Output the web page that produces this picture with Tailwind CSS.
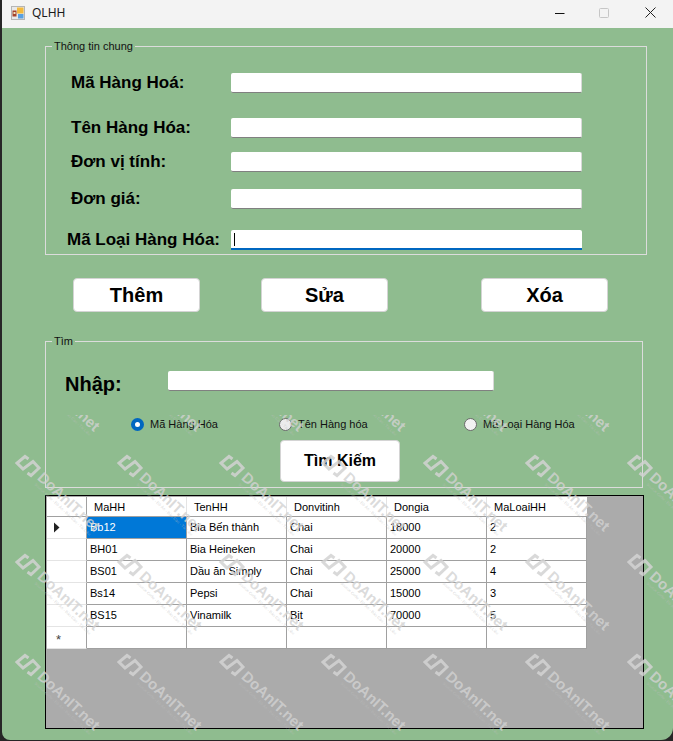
<!DOCTYPE html>
<html lang="vi">
<head>
    <meta charset="UTF-8">
    <title>QLHH</title>
    <script src="https://cdn.jsdelivr.net/npm/@tailwindcss/browser@4"></script>
</head>
<body class="bg-[#262626] font-['Liberation_Sans',sans-serif] text-black">
    <div class="relative w-[673px] h-[741px] overflow-hidden">
        <div class="ml-[2px] h-[740px] rounded-bl-lg rounded-br-xl overflow-hidden bg-[#8fbc8f]">

            <!-- title bar -->
            <div class="h-[28px] -ml-[2px] pb-[2px] bg-[#f3f3f3] flex items-center relative">
                <svg class="ml-[11px] w-[14px] h-[14px]" viewBox="0 0 14 14">
                    <rect x="0.5" y="0.5" width="13" height="13" fill="#e8e8e8" stroke="#b5b5b5"/>
                    <rect x="1.5" y="4.5" width="4" height="6" fill="#a5432a"/>
                    <rect x="2.5" y="6" width="2" height="2" fill="#f2e3c0"/>
                    <rect x="6" y="1.5" width="6.5" height="6" fill="#f4b93c"/>
                    <rect x="7" y="8" width="5.5" height="4.5" fill="#5aa0e0"/>
                </svg>
                <span class="ml-[7px] text-[12px] font-['Noto_Sans',sans-serif] text-[#1a1a1a]">QLHH</span>
                <div class="ml-auto flex items-center pb-[1px]">
                    <svg class="w-[12px] h-[12px]" viewBox="0 0 12 12"><path d="M1 6.5H10.5" stroke="#111" stroke-width="1"/></svg>
                    <svg class="ml-[32px] w-[12px] h-[12px]" viewBox="0 0 12 12"><rect x="1.5" y="1.5" width="9" height="9" rx="1" fill="none" stroke="#c6c6c6"/></svg>
                    <svg class="ml-[34px] mr-[16px] w-[13px] h-[13px]" viewBox="0 0 13 13"><path d="M1.5 1.5L11.5 11.5M11.5 1.5L1.5 11.5" stroke="#222" stroke-width="1"/></svg>
                </div>
            </div>

            <!-- group: thong tin chung -->
            <div class="relative ml-[43px] mt-[18px] w-[602px] h-[209px] border border-[#dcdcdc] pl-[25px] pt-[26px]">
                <span class="absolute left-[6px] -top-[7px] bg-[#8fbc8f] px-[2px] text-[11px] leading-[13px] text-[#111]">Thông tin chung</span>
                <div class="flex items-center h-[20px]">
                    <label class="w-[160px] text-[17px] font-bold">Mã Hàng Hoá:</label>
                    <input class="w-[351px] h-[20px] bg-white border-b border-[#808080] border-r-[#d8d8d8] border-r rounded-[2px]">
                </div>
                <div class="flex items-center h-[20px] mt-[25px]">
                    <label class="w-[160px] text-[17px] font-bold">Tên Hàng Hóa:</label>
                    <input class="w-[351px] h-[20px] bg-white border-b border-[#808080] border-r-[#d8d8d8] border-r rounded-[2px]">
                </div>
                <div class="flex items-center h-[20px] mt-[14px]">
                    <label class="w-[160px] text-[17px] font-bold">Đơn vị tính:</label>
                    <input class="w-[351px] h-[20px] bg-white border-b border-[#808080] border-r-[#d8d8d8] border-r rounded-[2px]">
                </div>
                <div class="flex items-center h-[20px] mt-[17px]">
                    <label class="w-[160px] text-[17px] font-bold">Đơn giá:</label>
                    <input class="w-[351px] h-[20px] bg-white border-b border-[#808080] border-r-[#d8d8d8] border-r rounded-[2px]">
                </div>
                <div class="flex items-center h-[20px] mt-[21px] -ml-[4px]">
                    <label class="w-[164px] text-[17px] font-bold">Mã Loại Hàng Hóa:</label>
                    <div class="w-[351px] h-[20px] bg-white border-b-2 border-[#0067c0] rounded-t-[2px] flex items-center pl-[3px]">
                        <span class="w-px h-[13px] bg-black"></span>
                    </div>
                </div>
            </div>

            <!-- action buttons -->
            <div class="flex mt-[23px] ml-[71px]">
                <button class="w-[127px] h-[34px] bg-white border border-[#d4d4d4] rounded-[4px] text-[20px] font-bold">Thêm</button>
                <button class="ml-[61px] w-[127px] h-[34px] bg-white border border-[#d4d4d4] rounded-[4px] text-[20px] font-bold">Sửa</button>
                <button class="ml-[93px] w-[127px] h-[34px] bg-white border border-[#d4d4d4] rounded-[4px] text-[20px] font-bold">Xóa</button>
            </div>

            <!-- group: tim -->
            <div class="relative ml-[43px] mt-[29px] w-[598px] h-[147px] border border-[#dcdcdc]">
                <span class="absolute left-[6px] -top-[7px] bg-[#8fbc8f] px-[2px] text-[11px] leading-[13px] text-[#111]">Tìm</span>
                <div class="flex items-center h-[20px] mt-[29px] ml-[19px]">
                    <label class="w-[103px] pt-[6px] text-[20px] font-bold">Nhập:</label>
                    <input class="w-[326px] h-[20px] bg-white border-b border-[#808080] border-r-[#d8d8d8] border-r rounded-[2px]">
                </div>
                <div class="flex items-center h-[16px] mt-[25px] ml-[85px] text-[11px] text-[#111]">
                    <span class="w-[13px] h-[13px] rounded-full border-[4px] border-[#0067c0] bg-white"></span>
                    <span class="ml-[6px] w-[129px]">Mã Hàng Hóa</span>
                    <span class="w-[13px] h-[13px] rounded-full border border-[#6a6a6a] bg-[#ececec]"></span>
                    <span class="ml-[6px] w-[166px]">Tên Hàng hóa</span>
                    <span class="w-[13px] h-[13px] rounded-full border border-[#6a6a6a] bg-[#f2f2f2]"></span>
                    <span class="ml-[6px]">Mã Loại Hàng Hóa</span>
                </div>
                <button class="block mt-[8px] ml-[234px] w-[120px] h-[42px] bg-white border border-[#d4d4d4] rounded-[4px] text-[16px] font-bold">Tìm Kiếm</button>
            </div>

            <!-- data grid -->
            <div class="ml-[43px] mt-[7px] w-[599px] h-[234px] border border-black bg-[#ababab] pl-px pt-px text-[11px]">
                <div class="grid grid-cols-[40px_repeat(5,100px)] grid-rows-[20px_repeat(6,22px)] w-[540px] bg-white">
                    <div class="border-r border-b border-[#a0a0a0]"></div>
                    <div class="border-r border-b border-[#a0a0a0] border-r-[#e4e4e4] pl-[7px] pt-[2px] flex items-center">MaHH</div>
                    <div class="border-r border-b border-[#a0a0a0] border-r-[#e4e4e4] pl-[7px] pt-[2px] flex items-center">TenHH</div>
                    <div class="border-r border-b border-[#a0a0a0] border-r-[#e4e4e4] pl-[7px] pt-[2px] flex items-center">Donvitinh</div>
                    <div class="border-r border-b border-[#a0a0a0] border-r-[#e4e4e4] pl-[7px] pt-[2px] flex items-center">Dongia</div>
                    <div class="border-b border-[#a0a0a0] pl-[7px] pt-[2px] flex items-center">MaLoaiHH</div>

                    <div class="border-r border-b border-[#a0a0a0] border-b-[#e4e4e4] flex items-center pl-[6px]">
                        <svg class="w-[7px] h-[11px]" viewBox="0 0 7 11"><path d="M1 0.5L6.5 5.5L1 10.5Z" fill="#222"/></svg>
                    </div>
                    <div class="border-r border-b border-[#a0a0a0] pl-[3px] flex items-center bg-[#0078d7] text-white">Bb12</div>
                    <div class="border-r border-b border-[#a0a0a0] pl-[3px] flex items-center">Bia Bến thành</div>
                    <div class="border-r border-b border-[#a0a0a0] pl-[3px] flex items-center">Chai</div>
                    <div class="border-r border-b border-[#a0a0a0] pl-[3px] flex items-center">18000</div>
                    <div class="border-r border-b border-[#a0a0a0] pl-[3px] flex items-center">2</div>

                    <div class="border-r border-b border-[#a0a0a0] border-b-[#e4e4e4]"></div>
                    <div class="border-r border-b border-[#a0a0a0] pl-[3px] flex items-center">BH01</div>
                    <div class="border-r border-b border-[#a0a0a0] pl-[3px] flex items-center">Bia Heineken</div>
                    <div class="border-r border-b border-[#a0a0a0] pl-[3px] flex items-center">Chai</div>
                    <div class="border-r border-b border-[#a0a0a0] pl-[3px] flex items-center">20000</div>
                    <div class="border-r border-b border-[#a0a0a0] pl-[3px] flex items-center">2</div>

                    <div class="border-r border-b border-[#a0a0a0] border-b-[#e4e4e4]"></div>
                    <div class="border-r border-b border-[#a0a0a0] pl-[3px] flex items-center">BS01</div>
                    <div class="border-r border-b border-[#a0a0a0] pl-[3px] flex items-center">Dầu ăn Simply</div>
                    <div class="border-r border-b border-[#a0a0a0] pl-[3px] flex items-center">Chai</div>
                    <div class="border-r border-b border-[#a0a0a0] pl-[3px] flex items-center">25000</div>
                    <div class="border-r border-b border-[#a0a0a0] pl-[3px] flex items-center">4</div>

                    <div class="border-r border-b border-[#a0a0a0] border-b-[#e4e4e4]"></div>
                    <div class="border-r border-b border-[#a0a0a0] pl-[3px] flex items-center">Bs14</div>
                    <div class="border-r border-b border-[#a0a0a0] pl-[3px] flex items-center">Pepsi</div>
                    <div class="border-r border-b border-[#a0a0a0] pl-[3px] flex items-center">Chai</div>
                    <div class="border-r border-b border-[#a0a0a0] pl-[3px] flex items-center">15000</div>
                    <div class="border-r border-b border-[#a0a0a0] pl-[3px] flex items-center">3</div>

                    <div class="border-r border-b border-[#a0a0a0] border-b-[#e4e4e4]"></div>
                    <div class="border-r border-b border-[#a0a0a0] pl-[3px] flex items-center">BS15</div>
                    <div class="border-r border-b border-[#a0a0a0] pl-[3px] flex items-center">Vinamilk</div>
                    <div class="border-r border-b border-[#a0a0a0] pl-[3px] flex items-center">Bịt</div>
                    <div class="border-r border-b border-[#a0a0a0] pl-[3px] flex items-center">70000</div>
                    <div class="border-r border-b border-[#a0a0a0] pl-[3px] flex items-center">5</div>

                    <div class="border-r border-b border-[#a0a0a0] border-b-[#e4e4e4] flex items-center pl-[9px] pt-[5px] text-[#444] text-[13px]">*</div>
                    <div class="border-r border-b border-[#a0a0a0]"></div>
                    <div class="border-r border-b border-[#a0a0a0]"></div>
                    <div class="border-r border-b border-[#a0a0a0]"></div>
                    <div class="border-r border-b border-[#a0a0a0]"></div>
                    <div class="border-r border-b border-[#a0a0a0]"></div>
                </div>
            </div>
        </div>

        <!-- watermark over the lower part of the form -->
        <div id="watermark" class="absolute left-0 top-[415px] w-[673px] h-[325px] overflow-hidden pointer-events-none"></div>
    </div>

    <script>
        // repeated site watermark, one tile per grid point
        const watermark = document.getElementById('watermark');
        [-49, 51, 150, 250].forEach(y => {
            for (let i = 0; i < 7; i++) {
                const tile = document.createElement('div');
                tile.className = 'absolute w-[110px] h-[100px]';
                tile.style.left = (14 + i * 102) + 'px';
                tile.style.top = (y - 12) + 'px';
                tile.innerHTML = `
                    <svg class="absolute left-0 top-0 w-[28px] h-[24px]" viewBox="0 0 28 24" fill="none" stroke="#d2d2d2" stroke-opacity="0.85" stroke-width="3">
                        <path d="M14.5 5L11 2.5L3 9L9 15L19 7.5L25 14L17 21.5L13.5 19"/>
                    </svg>
                    <span class="absolute left-[26px] top-[14px] origin-left rotate-[43deg] whitespace-nowrap text-[15px] leading-[14px] font-bold text-[#d2d2d2]/80">DoAnIT.net</span>
                    <span class="absolute left-[21px] top-[28px] origin-left rotate-[43deg] whitespace-nowrap text-[4px] leading-[4px] text-[#bdbdbd]/60">Source Code - Đồ Án - Báo Cáo - Tài Liệu</span>`;
                watermark.appendChild(tile);
            }
        });
    </script>
</body>
</html>
